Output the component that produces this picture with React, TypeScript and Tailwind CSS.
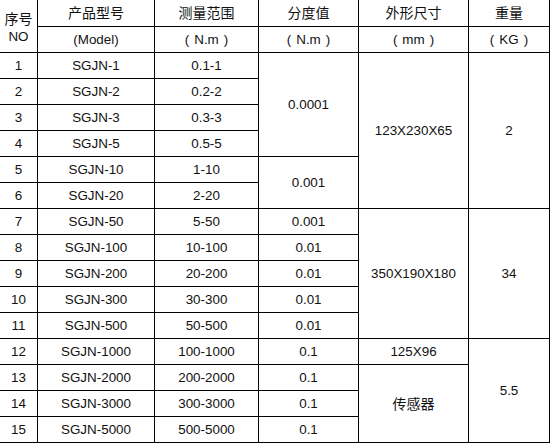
import React from "react";

type Cell = { text: string; span?: number; cjk?: boolean };

const rows: { no: number; model: string; range: string; c4?: Cell; c5?: Cell; c6?: Cell }[] = [
  { no: 1, model: "SGJN-1", range: "0.1-1", c4: { text: "0.0001", span: 4 }, c5: { text: "123X230X65", span: 6 }, c6: { text: "2", span: 6 } },
  { no: 2, model: "SGJN-2", range: "0.2-2" },
  { no: 3, model: "SGJN-3", range: "0.3-3" },
  { no: 4, model: "SGJN-5", range: "0.5-5" },
  { no: 5, model: "SGJN-10", range: "1-10", c4: { text: "0.001", span: 2 } },
  { no: 6, model: "SGJN-20", range: "2-20" },
  { no: 7, model: "SGJN-50", range: "5-50", c4: { text: "0.001" }, c5: { text: "350X190X180", span: 5 }, c6: { text: "34", span: 5 } },
  { no: 8, model: "SGJN-100", range: "10-100", c4: { text: "0.01" } },
  { no: 9, model: "SGJN-200", range: "20-200", c4: { text: "0.01" } },
  { no: 10, model: "SGJN-300", range: "30-300", c4: { text: "0.01" } },
  { no: 11, model: "SGJN-500", range: "50-500", c4: { text: "0.01" } },
  { no: 12, model: "SGJN-1000", range: "100-1000", c4: { text: "0.1" }, c5: { text: "125X96" }, c6: { text: "5.5", span: 4 } },
  { no: 13, model: "SGJN-2000", range: "200-2000", c4: { text: "0.1" }, c5: { text: "传感器", span: 3, cjk: true } },
  { no: 14, model: "SGJN-3000", range: "300-3000", c4: { text: "0.1" } },
  { no: 15, model: "SGJN-5000", range: "500-5000", c4: { text: "0.1" } },
];

const spanClass: Record<number, string> = {
  1: "",
  2: "row-span-2",
  3: "row-span-3",
  4: "row-span-4",
  5: "row-span-5",
  6: "row-span-6",
};

const base = "flex items-center justify-center border-r border-b border-black";

function C({ children, span = 1, cjk = false }: { children: React.ReactNode; span?: number; cjk?: boolean }) {
  return (
    <div className={`${base} ${spanClass[span]} ${cjk ? "text-[14px]" : "text-[13.4px]"}`}>{children}</div>
  );
}

function Unit({ u }: { u: string }) {
  return (
    <C>
      <span>(</span>
      <span className="mx-[5px]">{u}</span>
      <span>)</span>
    </C>
  );
}

export default function App() {
  return (
    <div
      className="w-[550px] h-[443px] bg-white text-[#111] grid grid-cols-[38px_117px_104px_100px_110px_81px] grid-rows-[27px_26px_repeat(15,26px)] leading-none"
      style={{ fontFamily: '"Liberation Sans", "Noto Sans CJK SC", sans-serif' }}
    >
      <div className={`${base} row-span-2 flex-col pt-[3px]`}>
        <span className="text-[14px] leading-[17px]">序号</span>
        <span className="text-[13.4px] leading-[17px]">NO</span>
      </div>
      <C cjk>产品型号</C>
      <C cjk>测量范围</C>
      <C cjk>分度值</C>
      <C cjk>外形尺寸</C>
      <C cjk>重量</C>
      <C>(Model)</C>
      <Unit u="N.m" />
      <Unit u="N.m" />
      <Unit u="mm" />
      <Unit u="KG" />
      {rows.map((r) => (
        <React.Fragment key={r.no}>
          <C>{r.no}</C>
          <C>{r.model}</C>
          <C>{r.range}</C>
          {r.c4 && <C span={r.c4.span}>{r.c4.text}</C>}
          {r.c5 && (
            <C span={r.c5.span} cjk={r.c5.cjk}>
              {r.c5.text}
            </C>
          )}
          {r.c6 && <C span={r.c6.span}>{r.c6.text}</C>}
        </React.Fragment>
      ))}
    </div>
  );
}
